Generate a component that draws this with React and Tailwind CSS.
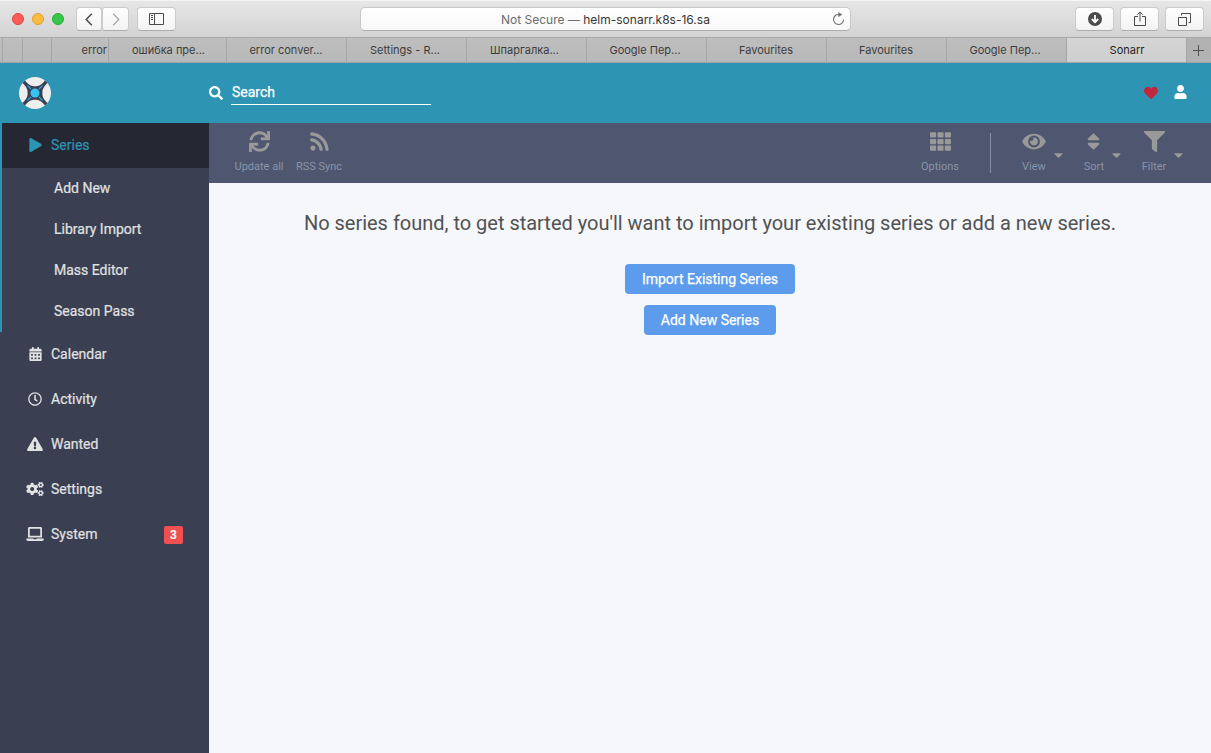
import {
  FaPlay, FaCalendarAlt, FaRegClock, FaExclamationTriangle, FaCogs, FaLaptop, FaSync, FaRss, FaTh,
  FaEye, FaSort, FaFilter, FaCaretDown, FaHeart, FaUser, FaSearch,
} from 'react-icons/fa';

const tabs = [
  { label: '', cls: 'w-[3px]' },
  { label: '', cls: 'w-[20px]' },
  { label: '', cls: 'w-[29px]' },
  { label: 'error', cls: 'w-[57px] justify-end pr-[1px]' },
  { label: 'ошибка пре...', cls: 'w-[118px] justify-center pl-[2px]' },
  { label: 'error conver...', cls: 'w-[120px] justify-center pr-[1px]' },
  { label: 'Settings - R...', cls: 'w-[120px] justify-center pr-[3px]' },
  { label: 'Шпаргалка...', cls: 'w-[120px] justify-center pr-[4px]' },
  { label: 'Google Пер...', cls: 'w-[120px] justify-center pr-[3px]' },
  { label: 'Favourites', cls: 'w-[120px] justify-center pr-[1px]' },
  { label: 'Favourites', cls: 'w-[120px] justify-center pr-[1px]' },
  { label: 'Google Пер...', cls: 'w-[120px] justify-center pr-[3px]' },
];

const chromeButton =
  'flex h-[24px] shrink-0 items-center justify-center bg-gradient-to-b from-white to-[#f3f3f3] border border-[#cbcbcb] border-b-[#adadad] text-[#4b4b4b]';

function TitleBar() {
  return (
    <div className="flex h-[37px] shrink-0 items-center border-t border-[#f5f5f5] bg-gradient-to-b from-[#e6e6e6] to-[#d3d3d3] pl-[12px] pr-[7px]">
      <div className="flex gap-[8px]">
        <span className="size-[12px] rounded-full border border-[#e0443e] bg-[#fc5b57]" />
        <span className="size-[12px] rounded-full border border-[#dea034] bg-[#fdbc40]" />
        <span className="size-[12px] rounded-full border border-[#27aa35] bg-[#34c84a]" />
      </div>
      <button className={`${chromeButton} ml-[12px] w-[26px] rounded-l-[4px] rounded-r-[3px]`}>
        <svg width="8" height="13" viewBox="0 0 8 13" fill="none" stroke="currentColor" strokeWidth="1.5"><path d="M6.8 .8 1.2 6.5l5.6 5.7" /></svg>
      </button>
      <button className={`${chromeButton} w-[27px] rounded-l-[3px] rounded-r-[4px]`}>
        <svg width="8" height="13" viewBox="0 0 8 13" fill="none" stroke="#a9a9a9" strokeWidth="1.3"><path d="M1.2 .8l5.6 5.7-5.6 5.7" /></svg>
      </button>
      <button className={`${chromeButton} ml-[8px] w-[39px] rounded-[4px]`}>
        <svg width="15" height="12" viewBox="0 0 15 12" fill="none" stroke="currentColor"><path d="M.5 .5h14v11H.5zM5.5 .5v11M2 2.5h2M2 4.5h2M2 6.5h2" /></svg>
      </button>
      <div className="ml-[184px] flex h-[24px] w-[491px] shrink-0 items-center rounded-[5px] border border-[#c8c8c8] border-b-[#acacac] bg-gradient-to-b from-white to-[#f8f8f8] pl-[140px] pr-[5px] text-[12px] text-[#363636]">
        <span className="mt-[2px] whitespace-pre"><span className="text-[#6c6c6c]">Not Secure — </span>helm-sonarr.k8s-16.sa</span>
        <svg className="ml-auto" width="13" height="14" viewBox="0 0 13 14" fill="none" stroke="#727272" strokeWidth="1.1"><path d="M6.8 2.5A5 5 0 1 0 11.5 7.5" /><path d="M6.3 0l3.9 2.6-3.9 2.6z" fill="#727272" stroke="none" /></svg>
      </div>
      <div className="ml-auto flex gap-[6px]">
        <button className={`${chromeButton} w-[39px] rounded-[4px]`}>
          <svg width="14" height="14" viewBox="0 0 14 14"><circle cx="7" cy="7" r="7" fill="currentColor" /><path d="M7 3v6.5M3.8 7 7 10.2 10.2 7" fill="none" stroke="#fff" strokeWidth="1.8" /></svg>
        </button>
        <button className={`${chromeButton} w-[39px] rounded-[4px]`}>
          <svg width="12" height="16" viewBox="0 0 12 16" fill="none" stroke="currentColor"><path d="M4 5.5H.5v9h11v-9H8M6 10.500V1M3.200 3.800 6 1l2.800 2.800" /></svg>
        </button>
        <button className={`${chromeButton} w-[39px] rounded-[4px]`}>
          <svg width="13" height="13" viewBox="0 0 13 13" fill="none" stroke="currentColor"><path d="M.5 4.500h8v8h-8zM3.500 2.500v-2h9v9h-2" /></svg>
        </button>
      </div>
    </div>
  );
}

function TabBar() {
  return (
    <div className="flex h-[26px] shrink-0 border-y border-t-[#a9a9a9] border-b-[#a3a3a3] bg-gradient-to-b from-[#bebebe] to-[#b8b8b8] text-[11px] text-[#3c3c3c]">
      {tabs.map((t, i) => (
        <div key={i} className={`flex shrink-0 items-center whitespace-nowrap border-r border-[#a6a6a6] pt-px ${t.cls}`}>{t.label}</div>
      ))}
      <div className="flex w-[120px] shrink-0 items-center justify-center border-r border-[#a6a6a6] bg-gradient-to-b from-[#d5d5d5] to-[#cfcfcf] pl-px pt-px text-[#1e1e1e]">Sonarr</div>
      <div className="flex flex-1 items-center justify-center bg-[#b2b2b2] pr-[2px]">
        <svg width="11" height="11" viewBox="0 0 11 11" stroke="#4f4f4f"><path d="M5.500 0v11M0 5.500h11" /></svg>
      </div>
    </div>
  );
}

function Logo() {
  return (
    <svg width="32" height="32" viewBox="0 0 32 32">
      <circle cx="16" cy="16" r="16" fill="#eee" />
      <path d="M6 3.500C10 8.600 12.500 9.200 16 9.200S22 8.600 26 3.500L28.500 6C23.900 10.500 23.400 12.500 23.400 16s.5 5.500 5.100 10L26 28.500C22 23.400 19.500 22.800 16 22.800S10 23.400 6 28.500L3.500 26C8.100 21.500 8.600 19.500 8.600 16S8.100 10.500 3.500 6z" fill="#3a3f51" />
      <path d="M8.500 8.500 12 12M23.500 8.500 20 12M8.500 23.500 12 20M23.500 23.500 20 20" stroke="#27a9dc" strokeWidth="1.100" />
      <circle cx="16" cy="16" r="4.500" fill="#35c5f4" />
    </svg>
  );
}

function Header() {
  return (
    <header className="flex h-[60px] shrink-0 items-center bg-[#2d94b4] text-white">
      <div className="w-[209px] shrink-0 pl-[19px]"><Logo /></div>
      <FaSearch className="size-[14px]" />
      <div className="ml-[8px] h-[24px] w-[200px] border-b border-white pl-px text-[14px] leading-[23px] [-webkit-text-stroke:0.25px]">Search</div>
      <FaHeart className="ml-auto size-[14px] text-[#c4273c]" />
      <FaUser className="ml-[16px] mr-[24px] mb-[2px] h-[14px] w-[13px]" />
    </header>
  );
}

const subItems = ['Add New', 'Library Import', 'Mass Editor', 'Season Pass'];
const items = [
  { label: 'Calendar', Icon: FaCalendarAlt, cls: 'h-[14px] w-[13px]' },
  { label: 'Activity', Icon: FaRegClock, cls: 'size-[14px]' },
  { label: 'Wanted', Icon: FaExclamationTriangle, cls: 'h-[14px] w-[16px]' },
  { label: 'Settings', Icon: FaCogs, cls: 'h-[14px] w-[18px]' },
  { label: 'System', Icon: FaLaptop, cls: 'h-[14px] w-[18px]', badge: '3' },
];

function Sidebar() {
  return (
    <nav className="w-[209px] shrink-0 bg-[#3a3f51] text-[14px] text-[#e1e2e3] [-webkit-text-stroke:0.2px]">
      <div className="border-l-2 border-[#2d94b4]">
        <div className="flex h-[45px] items-center bg-[#252833] pl-[24px] text-[#2d94b4]">
          <span className="flex w-[18px] justify-center pb-px"><FaPlay className="h-[14px] w-[13px]" /></span>
          <span className="ml-[7px]">Series</span>
        </div>
        {subItems.map((s) => (
          <div key={s} className="flex h-[41px] items-center pl-[52px]">{s}</div>
        ))}
      </div>
      {items.map(({ label, Icon, cls, badge }) => (
        <div key={label} className="flex h-[45px] items-center px-[26px]">
          <span className="flex w-[18px] justify-center pb-px"><Icon className={cls} /></span>
          <span className="ml-[7px]">{label}</span>
          {badge && <span className="ml-auto flex h-[18px] w-[19px] items-center justify-center rounded-[2px] bg-[#f05050] text-[12px] font-medium text-white">{badge}</span>}
        </div>
      ))}
    </nav>
  );
}

function ToolButton({ label, Icon, cls, caret }) {
  return (
    <div className="relative flex w-[60px] flex-col items-center pt-[6px] text-[#8895aa]">
      <span className="flex h-[25px] items-center text-[#999]"><Icon className={cls} /></span>
      <span className="mt-[5px] text-[11px] leading-[16px]">{label}</span>
      {caret && <FaCaretDown className={`absolute top-[25px] h-[14px] w-[9px] text-[#999] ${caret}`} />}
    </div>
  );
}

function Toolbar() {
  return (
    <div className="flex h-[60px] shrink-0 bg-[#4f566f] pl-[20px] pr-[27px]">
      <ToolButton label="Update all" Icon={FaSync} cls="size-[21px]" />
      <ToolButton label="RSS Sync" Icon={FaRss} cls="h-[21px] w-[19px]" />
      <div className="ml-auto flex">
        <ToolButton label="Options" Icon={FaTh} cls="size-[21px]" />
        <span className="ml-[20px] mr-[13px] mt-[10px] h-[40px] w-px bg-[#8592a6]" />
        <ToolButton label="View" Icon={FaEye} cls="h-[21px] w-[24px]" caret="left-[50px]" />
        <ToolButton label="Sort" Icon={FaSort} cls="mr-[2px] h-[21px] w-[13px]" caret="left-[48px]" />
        <ToolButton label="Filter" Icon={FaFilter} cls="size-[21px]" caret="left-[50px]" />
      </div>
    </div>
  );
}

export default function App() {
  return (
    <div className="flex h-[753px] w-[1211px] flex-col overflow-hidden font-[Roboto,sans-serif]">
      <div className="flex shrink-0 flex-col font-[Inter,sans-serif]">
        <TitleBar />
        <TabBar />
      </div>
      <Header />
      <div className="flex flex-1">
        <Sidebar />
        <main className="flex flex-1 flex-col bg-[#f5f7fa]">
          <Toolbar />
          <div className="flex flex-col items-center pt-[25px]">
            <p className="whitespace-nowrap text-[20px] leading-[30px] tracking-[-0.01px] text-[#515253]">No series found, to get started you'll want to import your existing series or add a new series.</p>
            <button className="mt-[26px] h-[30px] w-[170px] rounded-[4px] bg-[#5d9cec] text-[14px] text-white [-webkit-text-stroke:0.25px]">Import Existing Series</button>
            <button className="mt-[11px] h-[30px] w-[132px] rounded-[4px] bg-[#5d9cec] text-[14px] text-white [-webkit-text-stroke:0.25px]">Add New Series</button>
          </div>
        </main>
      </div>
    </div>
  );
}
